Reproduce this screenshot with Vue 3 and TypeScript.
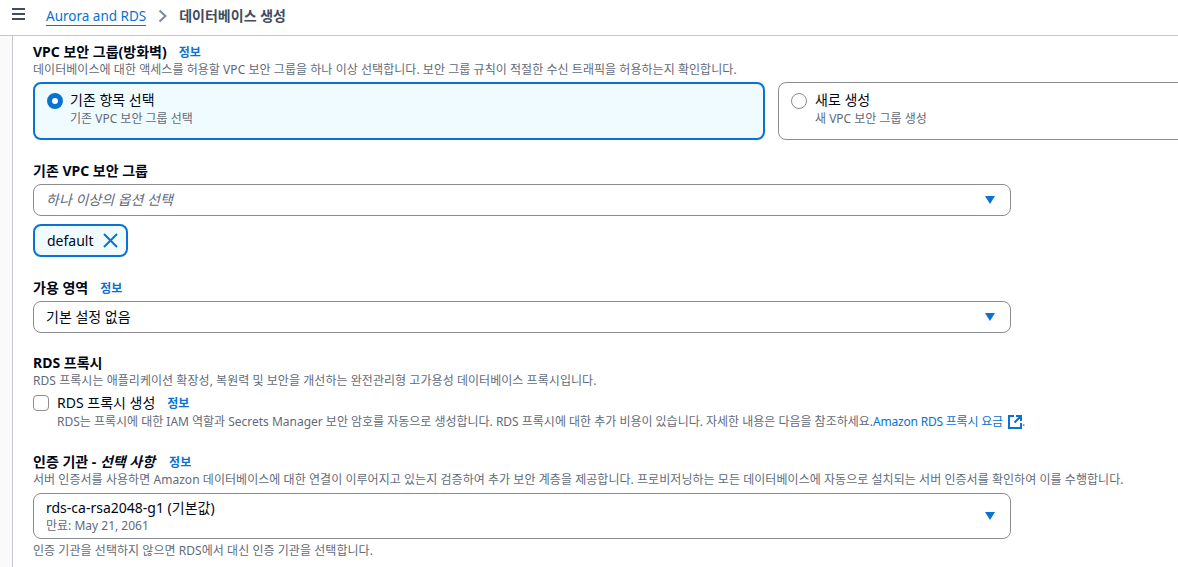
<script setup lang="ts">
const tiles = [
  { title: '기존 항목 선택', desc: '기존 VPC 보안 그룹 선택', on: true },
  { title: '새로 생성', desc: '새 VPC 보안 그룹 생성', on: false },
]
</script>

<template>
  <div class="page">
    <header class="topbar">
      <svg class="menu" width="14" height="12" viewBox="0 0 14 12"><path d="M0 1h13M0 6h13M0 11h13" stroke="#414d5c" stroke-width="2" fill="none" /></svg>
      <nav class="crumbs">
        <a class="crumb-link">Aurora and RDS</a>
        <svg class="chev" width="10" height="14" viewBox="0 0 10 14"><path d="M1.5 1.5 7.5 7l-6 5.5" stroke="#7d8998" stroke-width="2" fill="none" /></svg>
        <span class="crumb-cur">데이터베이스 생성</span>
      </nav>
    </header>

    <main class="main">
      <section class="field first">
        <div class="label">VPC 보안 그룹(방화벽)<a class="info">정보</a></div>
        <div class="desc vpc-desc">데이터베이스에 대한 액세스를 허용할 VPC 보안 그룹을 하나 이상 선택합니다. 보안 그룹 규칙이 적절한 수신 트래픽을 허용하는지 확인합니다.</div>
        <div class="tiles">
          <div v-for="t in tiles" :key="t.title" class="tile" :class="{ on: t.on }">
            <span class="radio" />
            <div>
              <div class="tile-title">{{ t.title }}</div>
              <div class="tile-desc">{{ t.desc }}</div>
            </div>
          </div>
        </div>
      </section>

      <section class="field sg">
        <div class="label">기존 VPC 보안 그룹</div>
        <div class="select"><span class="placeholder">하나 이상의 옵션 선택</span><i class="caret" /></div>
        <div class="token">
          <span>default</span>
          <svg width="15" height="15" viewBox="0 0 15 15"><path d="M1 1l13 13M14 1 1 14" stroke="#0972d3" stroke-width="2" fill="none" /></svg>
        </div>
      </section>

      <section class="field az">
        <div class="label">가용 영역<a class="info">정보</a></div>
        <div class="select"><span>기본 설정 없음</span><i class="caret" /></div>
      </section>

      <section class="field proxy">
        <div class="label">RDS 프록시</div>
        <div class="desc proxy-desc">RDS 프록시는 애플리케이션 확장성, 복원력 및 보안을 개선하는 완전관리형 고가용성 데이터베이스 프록시입니다.</div>
        <div class="check">
          <span class="box" />
          <div>
            <div class="check-title">RDS 프록시 생성<a class="info">정보</a></div>
            <div class="desc check-desc">RDS는 프록시에 대한 IAM 역할과 Secrets Manager 보안 암호를 자동으로 생성합니다. RDS 프록시에 대한 추가 비용이 있습니다. 자세한 내용은 다음을 참조하세요.<a class="ext">Amazon RDS 프록시 요금<svg width="14" height="14" viewBox="0 0 14 14"><path d="M6 1H1v12h12V8M8 1h5v5M13 1 6.500 7.500" stroke="#0972d3" stroke-width="2" fill="none" /></svg></a>.</div>
          </div>
        </div>
      </section>

      <section class="field ca">
        <div class="label">인증 기관 - <em>선택 사항</em><a class="info wide">정보</a></div>
        <div class="desc ca-desc">서버 인증서를 사용하면 Amazon 데이터베이스에 대한 연결이 이루어지고 있는지 검증하여 추가 보안 계층을 제공합니다. 프로비저닝하는 모든 데이터베이스에 자동으로 설치되는 서버 인증서를 확인하여 이를 수행합니다.</div>
        <div class="select tall">
          <div>
            <div class="sel-title">rds-ca-rsa2048-g1 (기본값)</div>
            <div class="sel-sub">만료: May 21, 2061</div>
          </div>
          <i class="caret" />
        </div>
        <div class="desc hint">인증 기관을 선택하지 않으면 RDS에서 대신 인증 기관을 선택합니다.</div>
      </section>
    </main>
  </div>
</template>

<style>
html, body { margin: 0; overflow: hidden; background: #fff; }
</style>

<style scoped>
.page {
  width: 1178px;
  height: 567px;
  overflow: hidden;
  background: #fafafa;
  font-family: "Noto Sans", "Noto Sans CJK KR", sans-serif;
  color: #000716;
  font-size: 14px;
  line-height: 20px;
}
.topbar {
  height: 36px;
  box-sizing: border-box;
  background: #fff;
  border-bottom: 1px solid #c6c6cd;
  display: flex;
  align-items: center;
  padding: 0 0 3px 12px;
}
.menu { flex: none; margin-top: -4px; }
.crumbs { display: flex; align-items: center; margin-left: 20px; }
.crumb-link { color: #0972d3; border-bottom: 1px solid #0972d3; line-height: 18px; font-size: 13.5px; }
.chev { margin: 0 11px 0 12px; }
.crumb-cur { color: #414d5c; font-weight: 700; font-size: 14px; }
.main {
  margin-left: 12px;
  padding-left: 20px;
  background: #fff;
  border-left: 1px solid #c6c6cd;
  height: 531px;
  box-sizing: border-box;
}
.field { display: block; }
.first { padding-top: 8px; }
.sg { margin-top: 23px; }
.az { margin-top: 23px; }
.proxy { margin-top: 22px; }
.ca { margin-top: 24px; }
.label { font-weight: 700; font-size: 14px; line-height: 15px; height: 17px; }
.label em { font-style: italic; }
.info { color: #0972d3; font-size: 12px; font-weight: 700; margin-left: 12px; }
.info.wide { margin-left: 14px; }
.desc { font-size: 12px; line-height: 16px; height: 16px; color: #5f6b7a; white-space: nowrap; letter-spacing: 0.05px; }
.vpc-desc { margin-top: 1px; }
.proxy-desc { margin-top: 1px; }
.ca-desc { margin-top: 1px; }
.tiles { display: flex; gap: 13px; margin-top: 4px; }
.tile {
  box-sizing: border-box;
  height: 58px;
  border: 1px solid #8c8c94;
  border-radius: 8px;
  display: flex;
  gap: 8px;
  padding: 7px 12px;
  flex: 0 0 732px;
}
.tile.on { border: 2px solid #0972d3; background: #f0fbff; padding: 6px 12px; gap: 7px; }
.radio {
  width: 16px;
  height: 16px;
  box-sizing: border-box;
  border: 1.5px solid #8c8c94;
  border-radius: 50%;
  margin-top: 3px;
  flex: none;
  background: #fff;
}
.tile.on .radio { border: 5px solid #0972d3; }
.tile-title { font-size: 14px; line-height: 20px; height: 20px; }
.tile-desc { font-size: 12px; line-height: 16px; height: 16px; margin-top: 1px; color: #5f6b7a; }
.select {
  box-sizing: border-box;
  width: 978px;
  height: 32px;
  margin-top: 4px;
  border: 1px solid #8c8c94;
  border-radius: 8px;
  display: flex;
  align-items: center;
  justify-content: space-between;
  padding: 0 15px 0 12px;
}
.placeholder { font-style: italic; color: #5f6b7a; }
.caret {
  width: 0;
  height: 0;
  border-left: 5.500px solid transparent;
  border-right: 5.500px solid transparent;
  border-top: 8px solid #0972d3;
  flex: none;
}
.token {
  box-sizing: border-box;
  width: 95px;
  height: 33px;
  margin-top: 8px;
  border: 2px solid #0972d3;
  border-radius: 8px;
  background: #f0fbff;
  display: flex;
  align-items: center;
  gap: 9px;
  padding-left: 12px;
}
.check { display: flex; gap: 8px; margin-top: 4px; }
.box {
  width: 16px;
  height: 16px;
  box-sizing: border-box;
  border: 1px solid #8c8c94;
  border-radius: 4px;
  margin-top: 2px;
  flex: none;
}
.check-title { line-height: 20px; height: 20px; }
.check-desc { letter-spacing: -0.01px; margin-top: 1px; }
.ext { color: #0972d3; letter-spacing: -0.2px; }
.ext svg { margin-left: 5px; vertical-align: -3px; }
.tall { height: 46px; margin-top: 5px; }
.sel-title { line-height: 20px; height: 20px; }
.sel-sub { font-size: 12px; line-height: 16px; height: 16px; color: #5f6b7a; }
.hint { margin-top: 4px; }
</style>
